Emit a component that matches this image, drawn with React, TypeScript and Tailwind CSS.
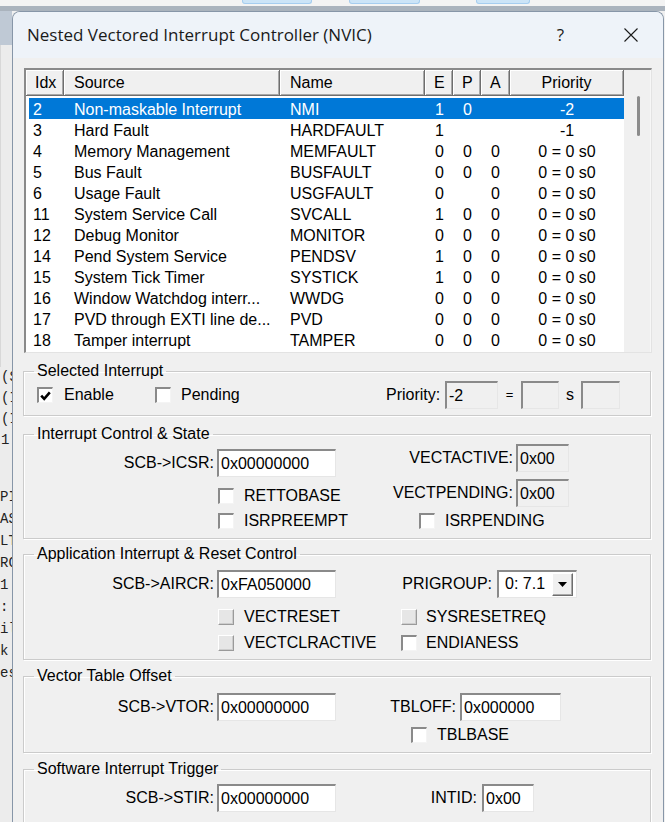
import React from "react";

const rows = [
  ["2", "Non-maskable Interrupt", "NMI", "1", "0", "", "-2"],
  ["3", "Hard Fault", "HARDFAULT", "1", "", "", "-1"],
  ["4", "Memory Management", "MEMFAULT", "0", "0", "0", "0 = 0 s0"],
  ["5", "Bus Fault", "BUSFAULT", "0", "0", "0", "0 = 0 s0"],
  ["6", "Usage Fault", "USGFAULT", "0", "", "0", "0 = 0 s0"],
  ["11", "System Service Call", "SVCALL", "1", "0", "0", "0 = 0 s0"],
  ["12", "Debug Monitor", "MONITOR", "0", "0", "0", "0 = 0 s0"],
  ["14", "Pend System Service", "PENDSV", "1", "0", "0", "0 = 0 s0"],
  ["15", "System Tick Timer", "SYSTICK", "1", "0", "0", "0 = 0 s0"],
  ["16", "Window Watchdog interr...", "WWDG", "0", "0", "0", "0 = 0 s0"],
  ["17", "PVD through EXTI line de...", "PVD", "0", "0", "0", "0 = 0 s0"],
  ["18", "Tamper interrupt", "TAMPER", "0", "0", "0", "0 = 0 s0"],
];

const codeLines = ["PI", "AS", "LT", "RC", "1", ":", "il", "k", "es"];

function Field({ w, value = "", grey = false }: { w: string; value?: string; grey?: boolean }) {
  return (
    <div
      className={`${w} h-[28px] flex items-center pl-[2px] border-t-2 border-l-2 border-b border-r border-t-[#8a8a8a] border-l-[#8a8a8a] border-b-[#e6e6e6] border-r-[#e6e6e6] ${
        grey ? "bg-[#f0f0f0]" : "bg-white"
      }`}
    >
      {value}
    </div>
  );
}

function Check({ checked = false, raised = false }: { checked?: boolean; raised?: boolean }) {
  if (raised) {
    return (
      <span className="w-[16px] h-[16px] shrink-0 bg-[#e6e6e6] border border-t-white border-l-white border-r-[#9a9a9a] border-b-[#9a9a9a] shadow-[inset_-1px_-1px_0_#cdcdcd]" />
    );
  }
  return (
    <span className="w-[16px] h-[16px] shrink-0 flex items-center justify-center bg-white border-t-2 border-l-2 border-b border-r border-t-[#8a8a8a] border-l-[#8a8a8a] border-b-[#f4f4f4] border-r-[#f4f4f4]">
      {checked && (
        <svg width="11" height="10" viewBox="0 0 11 10">
          <polyline points="1.2,4.6 4.2,7.8 9.8,1.4" fill="none" stroke="#000" strokeWidth="2.6" />
        </svg>
      )}
    </span>
  );
}

function CheckLabel({ label, checked, raised, gap = "ml-[10px]" }: { label: string; checked?: boolean; raised?: boolean; gap?: string }) {
  return (
    <div className="flex items-center h-[16px]">
      <Check checked={checked} raised={raised} />
      <span className={`${gap} leading-[16px]`}>{label}</span>
    </div>
  );
}

function Group({ title, className, children }: { title: string; className: string; children: React.ReactNode }) {
  return (
    <fieldset className={`w-[628px] border border-[#cbcbcb] shadow-[inset_1px_1px_0_#fff,1px_1px_0_#fff] ${className}`}>
      <legend className="ml-[10px] px-[3px] text-[16px] leading-[18px]">{title}</legend>
      {children}
    </fieldset>
  );
}

export default function App() {
  return (
    <div className="w-[665px] h-[822px] overflow-hidden flex flex-col bg-[#f0f0f0] text-black font-['Liberation_Sans',Arial,sans-serif] text-[16px]">
      {/* window behind the dialog */}
      <div className="h-[11px] shrink-0 flex flex-col bg-[#f3f3f3]">
        <div className="h-[4px] flex">
          <div className="ml-[242px] w-[70px] rounded-b-[3px] bg-[#cce4f7] border border-t-0 border-[#a6cdef]" />
          <div className="ml-[37px] w-[71px] rounded-b-[3px] bg-[#cce4f7] border border-t-0 border-[#a6cdef]" />
          <div className="ml-[56px] w-[54px] rounded-b-[3px] bg-[#cce4f7] border border-t-0 border-[#a6cdef]" />
        </div>
        <div className="h-[2px]" />
        <div className="h-[5px] bg-[#aab3bd]" />
      </div>

      <div className="flex flex-1 min-h-0">
        <div className="w-[12px] shrink-0 flex flex-col overflow-hidden bg-[#ececec] font-['Liberation_Mono','Courier_New',monospace] text-[14px] text-[#222] whitespace-nowrap">
          <div className="h-[34px] shrink-0 bg-[#bfc9d5]" />
          <div className="h-[322px] shrink-0 border-l border-[#d8d8d8]" />
          <div className="h-[21px] leading-[21px] pl-[1px]">(S</div>
          <div className="h-[21px] leading-[21px] pl-[1px]">(I</div>
          <div className="h-[21px] leading-[21px] pl-[1px]">(I</div>
          <div className="h-[21px] leading-[21px] pl-[1px]">1</div>
          <div className="h-[35px] shrink-0" />
          {codeLines.map((t, i) => (
            <div key={i} className="h-[22px] leading-[22px]">
              {t}
            </div>
          ))}
        </div>

        {/* dialog */}
        <div className="w-[652px] shrink-0 flex flex-col rounded-t-[8px] border border-b-0 border-[#8796a8] overflow-hidden">
          <div className="h-[46px] shrink-0 flex items-center pl-[14px] pr-[25px] bg-[#eef3f9] font-['Open_Sans',sans-serif] text-[17px] text-[#1a1a1a]">
            <span>Nested Vectored Interrupt Controller (NVIC)</span>
            <span className="ml-auto">?</span>
            <svg className="ml-[60px]" width="14" height="14" viewBox="0 0 14 14">
              <path d="M0.5 0.5 L13.5 13.5 M13.5 0.5 L0.5 13.5" stroke="#1a1a1a" strokeWidth="1.1" />
            </svg>
          </div>

          <div className="flex-1 flex flex-col bg-[#f0f0f0] pt-[10px] px-[10px]">
            {/* list view */}
            <div className="ml-[1px] w-[628px] h-[285px] shrink-0 flex border-t-2 border-l-2 border-b border-r border-t-[#8a8a8a] border-l-[#8a8a8a] border-b-[#e3e3e3] border-r-[#e3e3e3] bg-white">
              <div className="w-[598px] flex flex-col">
                <div className="h-[25px] grid grid-cols-[38px_216px_145px_28px_28px_29px_114px] bg-[#f0f0f0] leading-[25px]">
                  {["Idx", "Source", "Name", "E", "P", "A", "Priority"].map((h, i) => (
                    <div
                      key={h}
                      className={`border-r border-b border-[#6e6e6e] shadow-[inset_1px_1px_0_#fff,inset_-1px_-1px_0_#a8a8a8] ${
                        i === 0 ? "pl-[9px]" : i === 6 ? "text-center" : i >= 3 ? "pl-[9px]" : "pl-[10px]"
                      }`}
                    >
                      {h}
                    </div>
                  ))}
                </div>
                <div className="pt-[3px] pl-[3px]">
                  {rows.map((r, ri) => (
                    <div
                      key={r[0]}
                      className={`h-[21px] leading-[23px] grid grid-cols-[35px_216px_145px_28px_28px_29px_114px] whitespace-nowrap overflow-hidden ${
                        ri === 0 ? "bg-[#0078d7] text-white" : ""
                      }`}
                    >
                      <div className="pl-[4px]">{r[0]}</div>
                      <div className="pl-[10px] overflow-hidden">{r[1]}</div>
                      <div className="pl-[10px]">{r[2]}</div>
                      <div className="pl-[10px]">{r[3]}</div>
                      <div className="pl-[10px]">{r[4]}</div>
                      <div className="pl-[10px]">{r[5]}</div>
                      <div className="text-center">{r[6]}</div>
                    </div>
                  ))}
                </div>
              </div>
              <div className="flex-1 bg-[#f0f0f0] border-r border-[#f7f7f7]">
                <div className="mt-[26px] ml-[13px] w-[3px] h-[40px] rounded-full bg-[#8b8b8b]" />
              </div>
            </div>

            {/* Selected Interrupt */}
            <Group title="Selected Interrupt" className="mt-[9px] pt-[1px] pb-[6px]">
              <div className="h-[28px] flex items-center pl-[13px]">
                <div className="w-[118px]">
                  <CheckLabel label="Enable" checked gap="ml-[11px]" />
                </div>
                <div className="w-[231px]">
                  <CheckLabel label="Pending" />
                </div>
                <span className="w-[59px]">Priority:</span>
                <Field w="w-[53px]" value="-2" grey />
                <span className="w-[23px] text-center text-[13px]">=</span>
                <Field w="w-[38px]" grey />
                <span className="w-[22px] text-center">s</span>
                <Field w="w-[39px]" grey />
              </div>
            </Group>

            {/* Interrupt Control & State */}
            <Group title="Interrupt Control & State" className="mt-[9px] pb-[9px]">
              <div className="flex">
                <div className="w-[316px] pt-[6px] flex flex-col">
                  <div className="h-[28px] flex items-center">
                    <span className="w-[190px] text-right">SCB-&gt;ICSR:</span>
                    <div className="ml-[3px]">
                      <Field w="w-[119px]" value="0x00000000" />
                    </div>
                  </div>
                  <div className="mt-[11px] pl-[194px]">
                    <CheckLabel label="RETTOBASE" />
                  </div>
                  <div className="mt-[9px] pl-[194px]">
                    <CheckLabel label="ISRPREEMPT" />
                  </div>
                </div>
                <div className="pt-[1px] flex flex-col">
                  <div className="h-[28px] flex items-center">
                    <span className="w-[173px] text-right">VECTACTIVE:</span>
                    <div className="ml-[3px]">
                      <Field w="w-[53px]" value="0x00" grey />
                    </div>
                  </div>
                  <div className="mt-[7px] h-[28px] flex items-center">
                    <span className="w-[173px] text-right">VECTPENDING:</span>
                    <div className="ml-[3px]">
                      <Field w="w-[53px]" value="0x00" grey />
                    </div>
                  </div>
                  <div className="mt-[6px] pl-[79px]">
                    <CheckLabel label="ISRPENDING" />
                  </div>
                </div>
              </div>
            </Group>

            {/* Application Interrupt & Reset Control */}
            <Group title="Application Interrupt & Reset Control" className="mt-[6px] pt-[7px] pb-[8px]">
              <div className="h-[28px] flex items-center">
                <span className="w-[190px] text-right">SCB-&gt;AIRCR:</span>
                <div className="ml-[3px]">
                  <Field w="w-[119px]" value="0xFA050000" />
                </div>
                <span className="w-[156px] text-right">PRIGROUP:</span>
                <div className="ml-[5px] w-[80px] h-[28px] flex bg-white border-t-2 border-l-2 border-b border-r border-t-[#8a8a8a] border-l-[#8a8a8a] border-b-[#e6e6e6] border-r-[#e6e6e6]">
                  <span className="flex-1 pl-[6px] leading-[24px]">0: 7.1</span>
                  <div className="w-[21px] my-[1px] mr-[3px] flex items-center justify-center bg-[#f0f0f0] border border-t-white border-l-white border-r-[#6e6e6e] border-b-[#6e6e6e] shadow-[inset_-1px_-1px_0_#a8a8a8]">
                    <svg width="9" height="5" viewBox="0 0 9 5">
                      <path d="M0 0 H9 L4.5 5 Z" fill="#000" />
                    </svg>
                  </div>
                </div>
              </div>
              <div className="mt-[11px] pl-[194px] flex">
                <div className="w-[183px]">
                  <CheckLabel label="VECTRESET" raised />
                </div>
                <CheckLabel label="SYSRESETREQ" raised gap="ml-[9px]" />
              </div>
              <div className="mt-[10px] pl-[194px] flex">
                <div className="w-[183px]">
                  <CheckLabel label="VECTCLRACTIVE" raised />
                </div>
                <CheckLabel label="ENDIANESS" gap="ml-[9px]" />
              </div>
            </Group>

            {/* Vector Table Offset */}
            <Group title="Vector Table Offset" className="mt-[7px] pt-[8px] pb-[9px]">
              <div className="h-[28px] flex items-center">
                <span className="w-[190px] text-right">SCB-&gt;VTOR:</span>
                <div className="ml-[3px]">
                  <Field w="w-[119px]" value="0x00000000" />
                </div>
                <span className="w-[120px] text-right">TBLOFF:</span>
                <div className="ml-[4px]">
                  <Field w="w-[101px]" value="0x000000" />
                </div>
              </div>
              <div className="mt-[6px] pl-[387px]">
                <CheckLabel label="TBLBASE" />
              </div>
            </Group>

            {/* Software Interrupt Trigger */}
            <Group title="Software Interrupt Trigger" className="mt-[7px] pt-[6px] pb-[10px]">
              <div className="h-[28px] flex items-center">
                <span className="w-[190px] text-right">SCB-&gt;STIR:</span>
                <div className="ml-[3px]">
                  <Field w="w-[119px]" value="0x00000000" />
                </div>
                <span className="w-[141px] text-right">INTID:</span>
                <div className="ml-[5px]">
                  <Field w="w-[52px]" value="0x00" />
                </div>
              </div>
            </Group>
          </div>
        </div>
      </div>
    </div>
  );
}
